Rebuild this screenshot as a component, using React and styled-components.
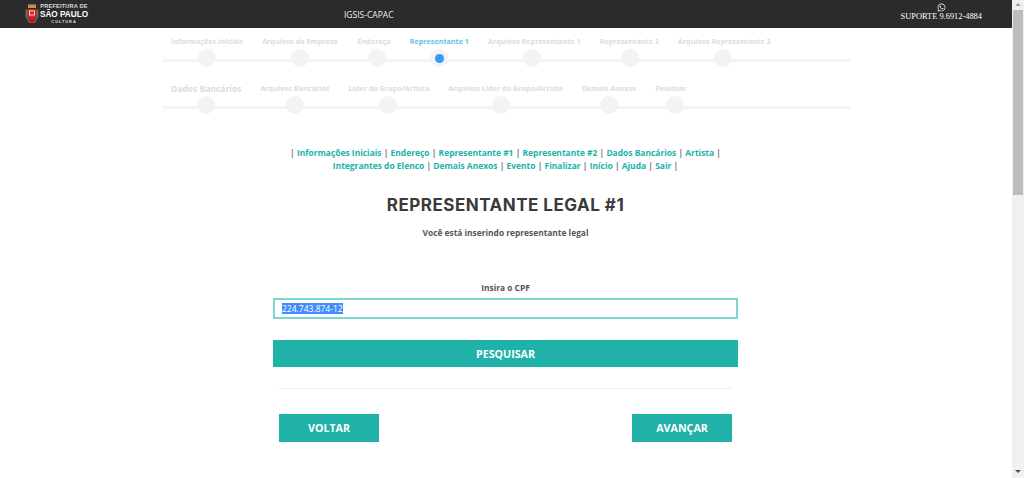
import React from 'react';
import styled, { createGlobalStyle } from 'styled-components';
import { FaWhatsapp } from 'react-icons/fa';

const GlobalStyle = createGlobalStyle`
html, body {
  margin: 0;
  height: 100%;
  overflow: hidden;
  background: #fff;
}
* {
  box-sizing: border-box;
}
`;

const Shell = styled.div`
display: flex;
height: 478px;
`;

const Page = styled.div`
flex: 1;
min-width: 0;
font-family: "Open Sans", sans-serif;
`;

const Header = styled.header`
display: flex;
align-items: center;
height: 28px;
background: #2b2b2b;
color: #fff;
padding-left: 25px;
`;

const Logo = styled.div`
display: flex;
align-items: center;
gap: 1px;
width: 319px;
`;

const LogoText = styled.div`
display: flex;
flex-direction: column;
align-items: center;
font-family: "Liberation Sans", sans-serif;
font-weight: 700;
line-height: 1;

span:nth-child(1) { font-size: 5.6px; color: #ddd; letter-spacing: 0.2px; }
span:nth-child(2) { font-size: 8.2px; margin-top: 1px; }
span:nth-child(3) { font-size: 4px; color: #ddd; letter-spacing: 0.9px; margin-top: 1px; }
`;

const AppName = styled.div`
font-size: 8.5px;
color: #eee;
`;

const Support = styled.div`
display: flex;
flex-direction: column;
align-items: center;
margin-left: auto;
margin-right: 30px;
margin-top: -4px;
font-family: "Liberation Serif", serif;
font-size: 8.4px;
line-height: 10px;
`;

const Stepper = styled.div`
position: relative;
display: flex;
width: 687px;
height: ${p => p.$height}px;
margin-left: 163px;
padding-top: ${p => p.$top}px;

&::after {
  content: '';
  position: absolute;
  left: 0;
  right: 0;
  bottom: 0;
  height: 3px;
  background: #f3f3f3;
}
`;

const Step = styled.div`
position: relative;
z-index: 1;
display: flex;
flex-direction: column;
align-items: center;
margin-left: ${p => p.$gap}px;
`;

const StepLabel = styled.div`
font-size: ${p => (p.$big ? 8.5 : 7.2)}px;
font-weight: 700;
line-height: 11px;
white-space: nowrap;
color: ${p => (p.$active ? '#5cc6ea' : '#dcdcdc')};
`;

const Dot = styled.div`
display: flex;
flex-shrink: 0;
align-items: center;
justify-content: center;
width: 18px;
height: 18px;
margin-top: 2px;
border-radius: 50%;
background: #f3f3f3;
transform: translateX(${p => p.$shift || 0}px);

&::after {
  content: '';
  display: ${p => (p.$active ? 'block' : 'none')};
  width: 9px;
  height: 9px;
  border-radius: 50%;
  background: #2f9df4;
}
`;

const Content = styled.main`
display: flex;
flex-direction: column;
align-items: center;
width: 465px;
margin-left: 273px;
`;

const NavLinks = styled.nav`
width: 470px;
margin-top: 37px;
font-size: 8.45px;
font-weight: 700;
line-height: 13px;
text-align: center;
color: #777;
flex-shrink: 0;

a {
  color: #20b2aa;
  text-decoration: none;
}
`;

const Title = styled.h1`
margin: 22px 0 0;
font-family: Inter, sans-serif;
font-size: 17px;
font-weight: 700;
letter-spacing: 0.5px;
line-height: 22px;
color: #3a3a3a;
`;

const Subtitle = styled.p`
margin: 11px 0 0;
font-size: 8.4px;
font-weight: 700;
line-height: 12px;
color: #555;
`;

const FieldLabel = styled.label`
margin-top: 43px;
font-size: 8.4px;
font-weight: 700;
line-height: 12px;
color: #555;
`;

const CpfBox = styled.div`
display: flex;
align-items: center;
align-self: stretch;
height: 21px;
margin-top: 4px;
padding-left: 7px;
border: 2px solid #7dd6cf;
background: #fff;
`;

const Selected = styled.span`
font-size: 8.5px;
line-height: 11px;
color: #fff;
background: #3f8cff;
`;

const SearchButton = styled.button`
align-self: stretch;
height: 27px;
margin-top: 21px;
border: 0;
background: #20b2a8;
color: #fff;
font-family: inherit;
font-size: 10.7px;
font-weight: 700;
`;

const Divider = styled.hr`
align-self: stretch;
height: 1px;
margin: 21px 6px 0;
border: 0;
background: #eee;
`;

const Actions = styled.div`
display: flex;
justify-content: space-between;
align-self: stretch;
margin-top: 25px;
padding: 0 6px;
`;

const ActionButton = styled.button`
width: 100px;
height: 28px;
border: 0;
background: #20b2a8;
color: #fff;
font-family: inherit;
font-size: 10.7px;
font-weight: 700;
`;

const Scrollbar = styled.div`
display: flex;
flex-direction: column;
align-items: center;
width: 12px;
background: #f0f0f0;
`;

const ScrollArrow = styled.div`
flex-shrink: 0;
width: 0;
height: 0;
margin: ${p => (p.$up ? '3px 0 4px' : '0 0 5px')};
border-left: 3px solid transparent;
border-right: 3px solid transparent;
border-${p => (p.$up ? 'bottom' : 'top')}: 3px solid ${p => (p.$up ? '#a3a3a3' : '#505050')};
`;

const ScrollThumb = styled.div`
width: 10px;
height: 185px;
background: #bdbdbd;
`;

const ScrollTrack = styled.div`
flex: 1;
`;

const CoatOfArms = () => (
  <svg width="14" height="20" viewBox="0 0 14 20">
    <rect x="3" y="0.5" width="8" height="3.5" fill="#b89a4a" />
    <path d="M2 5h10v8l-5 4-5-4z" fill="#d4202a" />
    <path d="M0.5 6 2 5v8l3 4H3l-2.5-4z" fill="#2f8f4a" />
    <path d="M13.5 6 12 5v8l-3 4h2l2.5-4z" fill="#2f8f4a" />
    <rect x="4.5" y="7" width="5" height="4" fill="none" stroke="#fff" strokeWidth="0.8" />
    <rect x="3" y="17" width="8" height="2" fill="#d4202a" />
  </svg>
);

const firstRow = [
  { label: 'Informações Iniciais', gap: 8 },
  { label: 'Arquivos da Empresa', gap: 19 },
  { label: 'Endereço', gap: 20, shift: 3 },
  { label: 'Representante 1', gap: 19, active: true },
  { label: 'Arquivos Representante 1', gap: 19, shift: -2 },
  { label: 'Representante 2', gap: 19, shift: 1 },
  { label: 'Arquivos Representante 2', gap: 19, shift: -1 },
];

const secondRow = [
  { label: 'Dados Bancários', gap: 8, big: true },
  { label: 'Arquivos Bancários', gap: 19 },
  { label: 'Líder do Grupo/Artista', gap: 19, shift: -1 },
  { label: 'Arquivos Líder do Grupo/Artista', gap: 19, shift: -4 },
  { label: 'Demais Anexos', gap: 19 },
  { label: 'Finalizar', gap: 19, shift: 4 },
];

const links = [
  'Informações Iniciais', 'Endereço', 'Representante #1', 'Representante #2',
  'Dados Bancários', 'Artista', 'Integrantes do Elenco', 'Demais Anexos',
  'Evento', 'Finalizar', 'Início', 'Ajuda', 'Sair',
];

const StepRow = ({ steps, height, top }) => (
  <Stepper $height={height} $top={top}>
    {steps.map(s => (
      <Step key={s.label} $gap={s.gap}>
        <StepLabel $active={s.active} $big={s.big}>{s.label}</StepLabel>
        <Dot $active={s.active} $shift={s.shift} />
      </Step>
    ))}
  </Stepper>
);

const App = () => {
  return (
    <Shell>
      <GlobalStyle />
      <Page>
        <Header>
          <Logo>
            <CoatOfArms />
            <LogoText>
              <span>PREFEITURA DE</span>
              <span>SÃO PAULO</span>
              <span>CULTURA</span>
            </LogoText>
          </Logo>
          <AppName>IGSIS-CAPAC</AppName>
          <Support>
            <FaWhatsapp size={9} />
            SUPORTE 9.6912-4884
          </Support>
        </Header>

        <StepRow steps={firstRow} height={34} top={8} />
        <StepRow steps={secondRow} height={47} top={21} />

        <Content>
          <NavLinks>
            {'| '}
            {links.map(l => (
              <React.Fragment key={l}>
                <a href="#">{l}</a>{' | '}
              </React.Fragment>
            ))}
          </NavLinks>
          <Title>REPRESENTANTE LEGAL #1</Title>
          <Subtitle>Você está inserindo representante legal</Subtitle>
          <FieldLabel>Insira o CPF</FieldLabel>
          <CpfBox>
            <Selected>224.743.874-12</Selected>
          </CpfBox>
          <SearchButton>PESQUISAR</SearchButton>
          <Divider />
          <Actions>
            <ActionButton>VOLTAR</ActionButton>
            <ActionButton>AVANÇAR</ActionButton>
          </Actions>
        </Content>
      </Page>
      <Scrollbar>
        <ScrollArrow $up />
        <ScrollThumb />
        <ScrollTrack />
        <ScrollArrow />
      </Scrollbar>
    </Shell>
  );
};

export default App;
